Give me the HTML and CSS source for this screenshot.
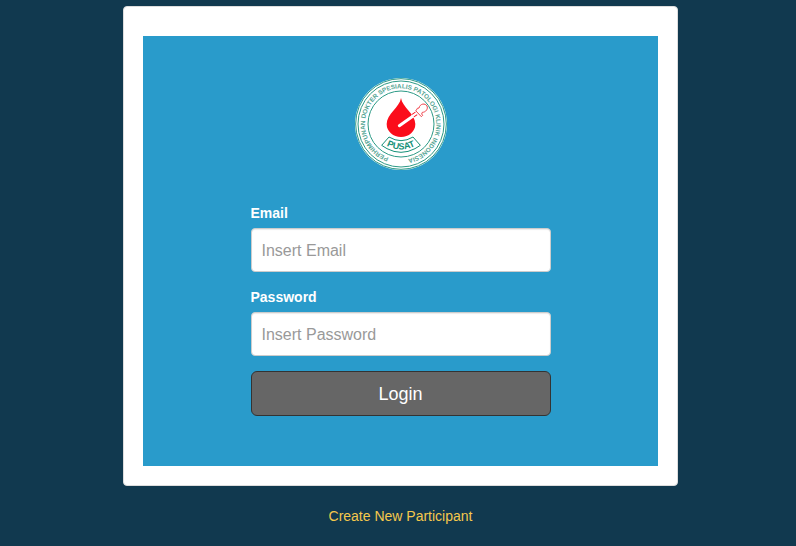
FILE: index.html
```html
<!DOCTYPE html>
<html lang="id">
    <head>
        <meta charset="utf-8">
        <title>Login</title>
        <link rel="stylesheet" href="styles.css">
    </head>

    <body>

        <main class="page">
        <div class="panel">
        <div class="login-box">

            <svg class="logo" viewBox="0 0 276 276" role="img" aria-label="Logo">
                <defs>
                    <path id="ring" d="M101 239 A107 107 0 1 1 163 242"/>
                    <path id="ribbon" d="M86 198 Q138 230 190 198"/>
                </defs>
                <circle cx="138" cy="138" r="138" fill="#fff"/>
                <circle cx="138" cy="138" r="136" fill="none" stroke="#2c9a86" stroke-width="3"/>
                <circle cx="138" cy="138" r="129" fill="none" stroke="#2c9a86" stroke-width="3"/>
                <circle cx="138" cy="138" r="99" fill="none" stroke="#2c9a86" stroke-width="3"/>

                <text class="ring-text"><textPath href="#ring">PERHIMPUNAN DOKTER SPESIALIS PATOLOGI KLINIK INDONESIA</textPath></text>

                <!-- blood drop -->
                <path d="M138 60 C142 88 181 108 181 138 A43 39 0 0 1 95 138 C95 108 134 88 138 60 Z" fill="#fb0d1b"/>

                <!-- pipette -->
                <path d="M133 143 L184 107" stroke="#fff" stroke-width="9" stroke-linecap="round"/>
                <path d="M174 113 L184 106" stroke="#fb0d1b" stroke-width="12"/>
                <path d="M170 116 L188 103" stroke="#fff" stroke-width="7"/>
                <path d="M184 97 L187 91 L192 90 C195 76 211 75 216 84 C220 93 212 103 202 103 L200 108 L203 112 L199 116 L182 98 Z" fill="#fff" stroke="#f0424b" stroke-width="3" stroke-linejoin="round"/>

                <!-- ribbon -->
                <path d="M102 177 Q138 199 174 177 L196 202 L180 212 Q138 234 96 212 L80 202 Z" fill="#fff" stroke="#159078" stroke-width="3" stroke-linejoin="round"/>
                <text class="ribbon-text"><textPath href="#ribbon" startOffset="50%">PUSAT</textPath></text>
            </svg>

            <form class="login-form">
                <div class="form-group">
                    <label for="email">Email</label>
                    <input type="email" id="email" name="email" placeholder="Insert Email">
                </div>
                <div class="form-group">
                    <label for="password">Password</label>
                    <input type="password" id="password" name="password" placeholder="Insert Password">
                </div>
                <button type="submit" class="btn-login">Login</button>
            </form>

        </div>
        </div>

        <a class="create" href="#">Create New Participant</a>
        </main>

    </body>
</html>
```

FILE: styles.css
```css
* {
    box-sizing: border-box;
}

body {
    margin: 0;
    background: #11394f;
    font-family: "Liberation Sans", Arial, sans-serif;
    font-size: 14px;
    line-height: 20px;
}

.page {
    display: flex;
    flex-direction: column;
    align-items: center;
    gap: 20px;
    padding: 6px 0 20px 5px;
}

.panel {
    width: 100%;
    max-width: 555px;
    padding: 29px 19px 19px;
    background: #fff;
    border: 1px solid #ddd;
    border-radius: 4px;
}

.login-box {
    display: flex;
    flex-direction: column;
    align-items: center;
    gap: 33px;
    padding: 42px 20px 50px;
    background: #299bcb;
}

.logo {
    display: block;
    width: 92px;
    height: 92px;
}

.ring-text {
    font-size: 19px;
    font-weight: bold;
    fill: #55a594;
}

.ribbon-text {
    font-size: 27px;
    font-weight: bold;
    text-anchor: middle;
    fill: #159078;
}

.login-form {
    width: 100%;
    max-width: 300px;
}

.form-group {
    margin-bottom: 15px;
}

label {
    display: block;
    margin-bottom: 5px;
    color: #fff;
    font-weight: bold;
}

input {
    display: block;
    width: 100%;
    height: 44px;
    padding: 12px 10px 10px;
    border: 1px solid #ccc;
    border-radius: 4px;
    background: #fff;
    box-shadow: inset 0 1px 1px rgba(0, 0, 0, 0.08);
    color: #555;
    font-family: inherit;
    font-size: 16px;
}

input::placeholder {
    color: #999;
    opacity: 1;
}

.btn-login {
    display: block;
    width: 100%;
    height: 45px;
    padding: 2px 16px 0;
    border: 1px solid #333;
    border-radius: 6px;
    background: #666;
    color: #fff;
    font-family: inherit;
    font-size: 18px;
    cursor: pointer;
}

.create {
    color: #f5c84c;
    text-decoration: none;
}
```
